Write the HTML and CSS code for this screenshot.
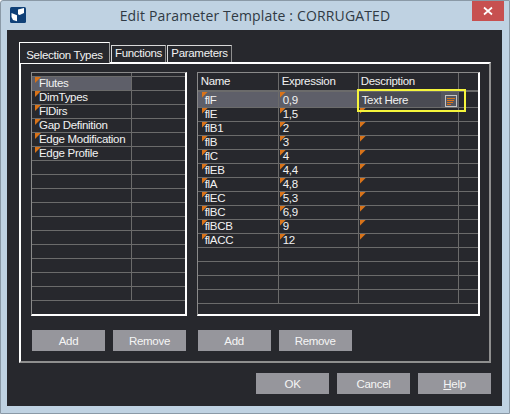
FILE: index.html
```html
<!DOCTYPE html>
<html lang="en">
<head>
<meta charset="utf-8">
<title>Edit Parameter Template : CORRUGATED</title>
<link rel="stylesheet" href="styles.css">
</head>
<body>
<div class="window">
  <div class="titlebar">
    <svg class="app-icon" viewBox="0 0 16 16" aria-hidden="true"><rect width="16" height="16" rx="1.5" fill="#0f4077"/><path d="M1.5 6L7 8.2V14.2L3 13 1.5 10z" fill="#fff"/><path d="M8 2.6L14 1v5L9.6 8 8 7.2z" fill="#fff"/></svg>
    <div class="title">Edit Parameter Template : CORRUGATED</div>
    <div class="close"><svg viewBox="0 0 10 10" class="close-x" aria-hidden="true"><path d="M1 1.5l8 7M9 1.5l-8 7" stroke="#fff" stroke-width="1.7" fill="none"/></svg></div>
  </div>
  <div class="client">
    <div class="tabs">
      <div class="tab active">Selection Types</div>
      <div class="tab t-fn">Functions</div>
      <div class="tab t-pa">Parameters</div>
    </div>
    <div class="pane">
      <div class="column col-left">
        <div class="grid">
          <div class="row head-thin"><span class="c l1"></span><span class="c l2"></span></div>
          <div class="row sel"><span class="c l1 mark">Flutes</span><span class="c l2"></span></div>
          <div class="row"><span class="c l1 mark">DimTypes</span><span class="c l2"></span></div>
          <div class="row"><span class="c l1 mark">FlDirs</span><span class="c l2"></span></div>
          <div class="row"><span class="c l1 mark">Gap Definition</span><span class="c l2"></span></div>
          <div class="row"><span class="c l1 mark">Edge Modification</span><span class="c l2"></span></div>
          <div class="row"><span class="c l1 mark">Edge Profile</span><span class="c l2"></span></div>
          <div class="row"><span class="c l1"></span><span class="c l2"></span></div>
          <div class="row"><span class="c l1"></span><span class="c l2"></span></div>
          <div class="row"><span class="c l1"></span><span class="c l2"></span></div>
          <div class="row"><span class="c l1"></span><span class="c l2"></span></div>
          <div class="row"><span class="c l1"></span><span class="c l2"></span></div>
          <div class="row"><span class="c l1"></span><span class="c l2"></span></div>
          <div class="row"><span class="c l1"></span><span class="c l2"></span></div>
          <div class="row"><span class="c l1"></span><span class="c l2"></span></div>
          <div class="row"><span class="c l1"></span><span class="c l2"></span></div>
          <div class="row"><span class="c l1"></span><span class="c l2"></span></div>
        </div>
        <div class="buttons"><div class="btn">Add</div><div class="btn">Remove</div></div>
      </div>
      <div class="column col-right">
        <div class="grid">
          <div class="row head"><span class="c r1">Name</span><span class="c r2">Expression</span><span class="c r3">Description</span><span class="c r4"></span></div>
          <div class="row sel tall"><span class="c r1 mark">flF</span><span class="c r2 mark">0,9</span><span class="c r3 editor"><span class="edit-text">Text Here</span><span class="edit-btn"><svg viewBox="0 0 12 12" class="edit-icon" aria-hidden="true"><rect x=".5" y=".5" width="11" height="11" fill="none" stroke="#c4c4c4"/><path d="M2 3.5h8M2 5.5h7M2 7.5h6M2 9.5h4" stroke="#d8731a"/></svg></span></span><span class="c r4"></span></div>
          <div class="row"><span class="c r1 mark">flE</span><span class="c r2 mark">1,5</span><span class="c r3 mark"></span><span class="c r4"></span></div>
          <div class="row"><span class="c r1 mark">flB1</span><span class="c r2 mark">2</span><span class="c r3 mark"></span><span class="c r4"></span></div>
          <div class="row"><span class="c r1 mark">flB</span><span class="c r2 mark">3</span><span class="c r3 mark"></span><span class="c r4"></span></div>
          <div class="row"><span class="c r1 mark">flC</span><span class="c r2 mark">4</span><span class="c r3 mark"></span><span class="c r4"></span></div>
          <div class="row"><span class="c r1 mark">flEB</span><span class="c r2 mark">4,4</span><span class="c r3 mark"></span><span class="c r4"></span></div>
          <div class="row"><span class="c r1 mark">flA</span><span class="c r2 mark">4,8</span><span class="c r3 mark"></span><span class="c r4"></span></div>
          <div class="row"><span class="c r1 mark">flEC</span><span class="c r2 mark">5,3</span><span class="c r3 mark"></span><span class="c r4"></span></div>
          <div class="row"><span class="c r1 mark">flBC</span><span class="c r2 mark">6,9</span><span class="c r3 mark"></span><span class="c r4"></span></div>
          <div class="row"><span class="c r1 mark">flBCB</span><span class="c r2 mark">9</span><span class="c r3 mark"></span><span class="c r4"></span></div>
          <div class="row"><span class="c r1 mark">flACC</span><span class="c r2 mark">12</span><span class="c r3 mark"></span><span class="c r4"></span></div>
          <div class="row"><span class="c r1"></span><span class="c r2"></span><span class="c r3"></span><span class="c r4"></span></div>
          <div class="row"><span class="c r1"></span><span class="c r2"></span><span class="c r3"></span><span class="c r4"></span></div>
          <div class="row"><span class="c r1"></span><span class="c r2"></span><span class="c r3"></span><span class="c r4"></span></div>
          <div class="row"><span class="c r1"></span><span class="c r2"></span><span class="c r3"></span><span class="c r4"></span></div>
          <div class="highlight"></div>
        </div>
        <div class="buttons"><div class="btn">Add</div><div class="btn">Remove</div></div>
      </div>
    </div>
    <div class="footer">
      <div class="btn">OK</div>
      <div class="btn">Cancel</div>
      <div class="btn"><span><u>H</u>elp</span></div>
    </div>
  </div>
</div>
</body>
</html>
```
FILE: styles.css
```css
* { box-sizing: border-box; }
html, body { margin: 0; padding: 0; background: #fff; }
body { width: 510px; height: 414px; overflow: hidden; font-family: "Liberation Sans", Arial, sans-serif; font-size: 11.5px; letter-spacing: -0.3px; color: #f2f2f2; }
.window { width: 510px; height: 414px; background: #bfd2e2; border: 1px solid #8a99a6; border-top-left-radius: 3px; display: flex; flex-direction: column; padding: 0 7px 7px 6px; }
.titlebar { height: 29px; flex: none; display: flex; position: relative; align-items: flex-start; }
.app-icon { width: 16px; height: 16px; margin: 6px 0 0 3px; flex: none; }
.title { position: absolute; left: -7px; right: -8px; top: 5px; text-align: center; font-family: "Open Sans", sans-serif; font-size: 14px; letter-spacing: 0.15px; line-height: 20px; color: #303a44; }
.close { position: absolute; right: -2px; top: 0; width: 32px; height: 20px; background: #c75050; display: flex; align-items: center; justify-content: center; }
.close-x { width: 10px; height: 10px; }
.client { flex: 1; background: #27282d; padding: 12px 11px 0 12px; display: flex; flex-direction: column; }
.tabs { display: flex; height: 20px; flex: none; align-items: flex-end; }
.tab { height: 17px; margin-left: 1px; line-height: 14px; text-align: center; border: 1px solid #d8d8d8; border-right-color: #8f8f8f; border-bottom: 0; color: #f2f2f2; }
.t-fn { width: 55px; }
.t-pa { width: 65px; }
.tab.active { width: 91px; height: 21px; margin-left: 0; line-height: 24px; border-color: #fff; border-right-color: #a0a0a0; position: relative; top: 1px; background: #27282d; z-index: 1; }
.pane { height: 301px; flex: none; border: 2px solid #fff; border-right-color: #8f8f8f; border-bottom-color: #8f8f8f; padding: 8px 9px 0 10px; display: flex; gap: 10px; }
.column { display: flex; flex-direction: column; }
.col-left { width: 156px; }
.col-right { width: 284px; }
.grid { position: relative; height: 244px; flex: none; border: 1px solid #8a8a8a; border-right: 2px solid #fff; border-bottom: 2px solid #fff; }
.row { display: flex; height: 14px; border-bottom: 1px solid #6b6b6b; }
.row.head-thin { height: 4px; }
.row.head { height: 19px; border-bottom: 2px solid #6b6b6b; }
.row.tall { height: 16px; }
.row.tall .c { line-height: 16px; }
.c { display: block; height: 100%; position: relative; border-right: 1px solid #6b6b6b; padding-left: 2px; line-height: 13px; white-space: nowrap; }
.l1 { width: 100px; }
.l2 { flex: 1; border-right: 0; }
.r1 { width: 81px; }
.r2 { width: 80px; }
.r3 { width: 100px; }
.r4 { flex: 1; border-right: 0; }
.row.head .c { padding: 1px 0 0 3px; line-height: 14px; }
.row.head .r3 { padding-left: 2px; }
.row.sel .r1, .row.sel .r2, .row.sel .l1 { background: #5e5f69; }
.mark::before { content: ""; position: absolute; left: 1px; top: 0; width: 6px; height: 6px; background: #d8731a; clip-path: polygon(0 0, 100% 0, 0 100%); }
.l1.mark, .r1.mark { padding-left: 7px; }
.r2.mark { padding-left: 4px; }
.l1.mark::before { left: 3px; }
.r1.mark::before { left: 4px; }
.editor { display: flex; padding: 0; background: #4a4b53; }
.edit-text { flex: 1; padding-left: 3px; }
.edit-btn { width: 17px; display: flex; align-items: flex-start; justify-content: flex-end; padding: 3px 1px 0 0; background: #55565f; }
.edit-icon { width: 12px; height: 12px; flex: none; }
.highlight { position: absolute; left: 159px; top: 16px; width: 109px; height: 23px; border: 2px solid #f5f53c; }
.buttons { display: flex; gap: 8px; margin-top: 14px; padding-left: 1px; }
.btn { width: 73px; height: 21px; background: #96969c; color: #f5f5f5; display: flex; align-items: center; justify-content: center; }
.footer { display: flex; gap: 8px; justify-content: flex-end; margin-top: 10px; }
```
